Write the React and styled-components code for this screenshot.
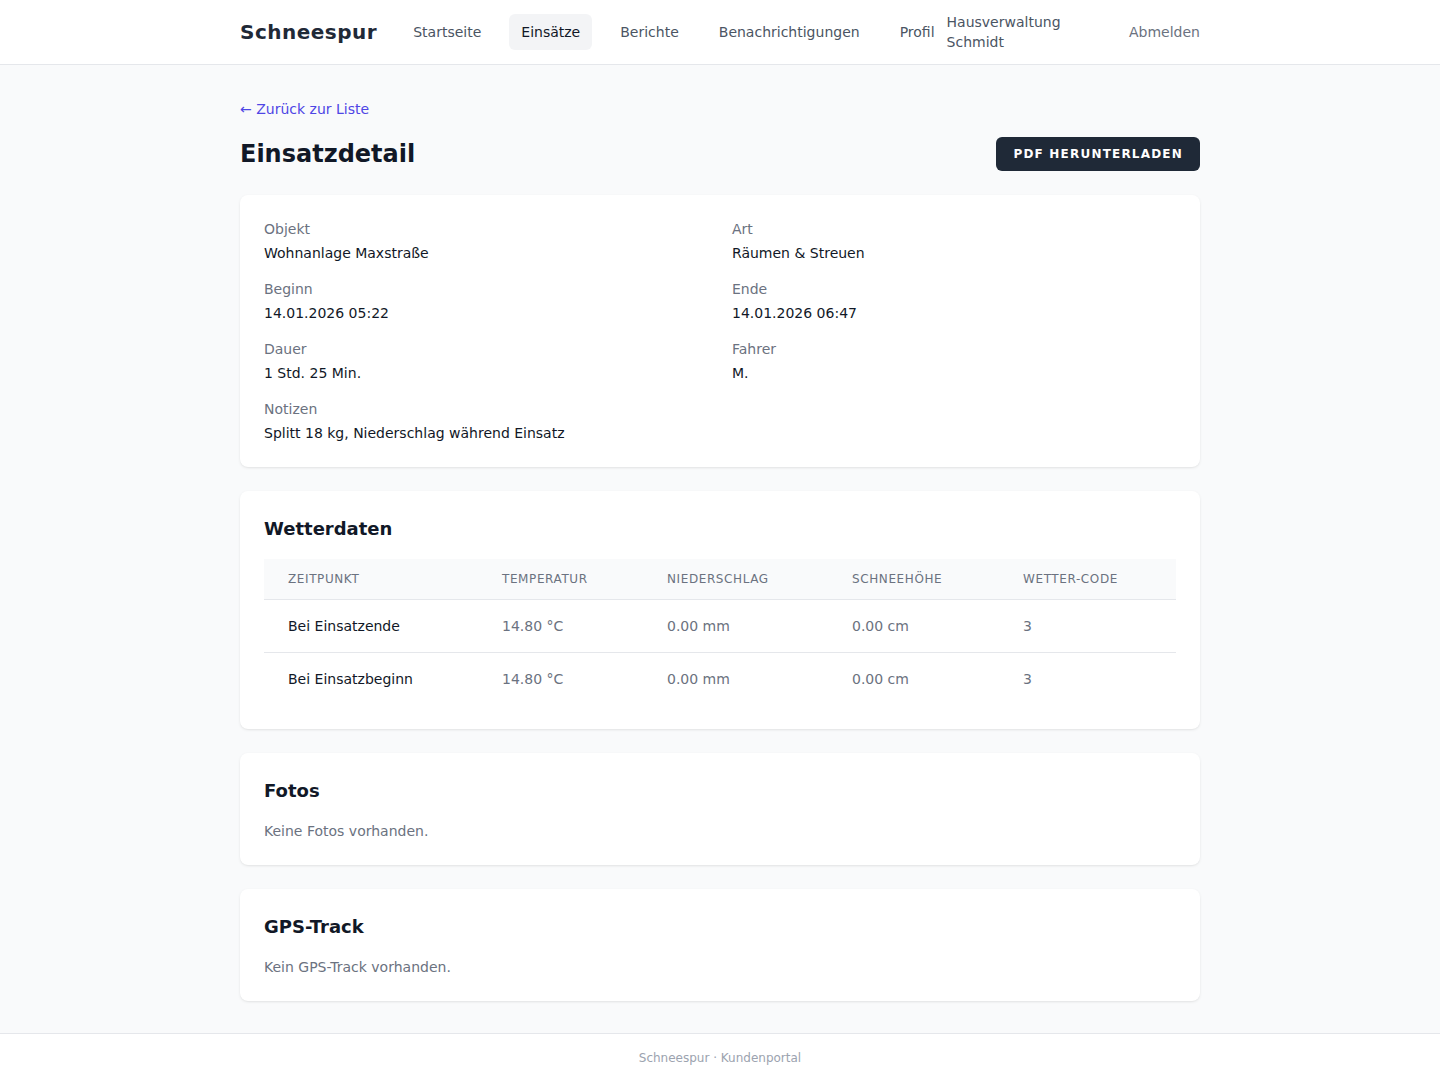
import React from "react";
import styled, { createGlobalStyle } from "styled-components";

const GlobalStyle = createGlobalStyle`
  *, *::before, *::after { box-sizing: border-box; }
  html, body { margin: 0; padding: 0; }
  body {
    font-family: "DejaVu Sans", "Liberation Sans", sans-serif;
    background: #f9fafb;
    color: #111827;
    -webkit-font-smoothing: antialiased;
  }
`;

const Page = styled.div`
  min-height: 100vh;
  display: flex;
  flex-direction: column;
`;

const Header = styled.header`
  background: #ffffff;
  border-bottom: 1px solid #e5e7eb;
  height: 65px;
`;

const HeaderInner = styled.div`
  max-width: 960px;
  margin: 0 auto;
  height: 64px;
  display: flex;
  align-items: center;
`;

const Logo = styled.div`
  font-size: 20px;
  font-weight: 700;
  letter-spacing: 0.025em;
  color: #1f2937;
  line-height: 28px;
`;

const Nav = styled.nav`
  display: flex;
  align-items: center;
  gap: 16px;
  margin-left: 24px;
`;

const NavLink = styled.a`
  font-size: 14px;
  line-height: 20px;
  padding: 8px 12px;
  border-radius: 6px;
  text-decoration: none;
  color: ${(p) => (p.$active ? "#111827" : "#4b5563")};
  background: ${(p) => (p.$active ? "#f3f4f6" : "transparent")};
`;

const UserName = styled.span`
  font-size: 14px;
  line-height: 20px;
  color: #4b5563;
  width: 166px;
`;

const Logout = styled.a`
  margin-left: auto;
  font-size: 14px;
  line-height: 20px;
  color: #6b7280;
  text-decoration: none;
`;

const Main = styled.main`
  flex: 1;
  width: 960px;
  margin: 0 auto;
  padding: 34px 0 32px;
`;

const BackLink = styled.a`
  display: block;
  font-size: 14px;
  line-height: 20px;
  color: #4f46e5;
  text-decoration: none;
  margin-bottom: 18px;
`;

const TitleRow = styled.div`
  display: flex;
  align-items: center;
  justify-content: space-between;
  height: 34px;
  margin-bottom: 24px;
`;

const Title = styled.h1`
  margin: 0;
  font-size: 24px;
  line-height: 32px;
  font-weight: 700;
  color: #111827;
`;

const PrimaryButton = styled.button`
  font-family: inherit;
  border: none;
  background: #1f2937;
  color: #ffffff;
  font-size: 12px;
  line-height: 16px;
  font-weight: 700;
  letter-spacing: 0.1em;
  text-transform: uppercase;
  padding: 9px 17px;
  border-radius: 6px;
`;

const Card = styled.section`
  background: #ffffff;
  border-radius: 8px;
  box-shadow: 0 1px 3px rgba(0, 0, 0, 0.08), 0 1px 2px -1px rgba(0, 0, 0, 0.08);
  padding: 24px;
  & + & { margin-top: 24px; }
`;

const DetailGrid = styled.dl`
  margin: 0;
  display: grid;
  grid-template-columns: 1fr 1fr;
  column-gap: 24px;
  row-gap: 16px;
`;

const Field = styled.div``;

const Label = styled.dt`
  font-size: 14px;
  line-height: 20px;
  color: #6b7280;
`;

const Value = styled.dd`
  margin: 4px 0 0;
  font-size: 14px;
  line-height: 20px;
  color: #111827;
`;

const CardTitle = styled.h2`
  margin: 0 0 16px;
  font-size: 18px;
  line-height: 28px;
  font-weight: 700;
  color: #111827;
`;

const Muted = styled.p`
  margin: 0;
  font-size: 14px;
  line-height: 20px;
  color: #6b7280;
`;

const Table = styled.table`
  width: 100%;
  border-collapse: collapse;
`;

const Th = styled.th`
  text-align: left;
  background: #f9fafb;
  font-size: 12px;
  line-height: 16px;
  font-weight: 400;
  letter-spacing: 0.05em;
  text-transform: uppercase;
  color: #6b7280;
  padding: 12px 24px;
  border-bottom: 1px solid #e5e7eb;
  width: ${(p) => p.$w}px;
`;

const Tr = styled.tr`
  & + & td { border-top: 1px solid #e5e7eb; }
`;

const Td = styled.td`
  font-size: 14px;
  line-height: 20px;
  padding: 16px 24px;
  color: ${(p) => (p.$strong ? "#111827" : "#6b7280")};
`;

const Footer = styled.footer`
  background: #ffffff;
  border-top: 1px solid #e5e7eb;
  padding: 16px 0;
  text-align: center;
  font-size: 12px;
  line-height: 16px;
  color: #9ca3af;
`;

const details = [
  ["Objekt", "Wohnanlage Maxstraße"],
  ["Art", "Räumen & Streuen"],
  ["Beginn", "14.01.2026 05:22"],
  ["Ende", "14.01.2026 06:47"],
  ["Dauer", "1 Std. 25 Min."],
  ["Fahrer", "M."],
  ["Notizen", "Splitt 18 kg, Niederschlag während Einsatz"],
];

const columns = [
  ["Zeitpunkt", 214],
  ["Temperatur", 165],
  ["Niederschlag", 185],
  ["Schneehöhe", 171],
  ["Wetter-Code", 177],
];

const weather = [
  ["Bei Einsatzende", "14.80 °C", "0.00 mm", "0.00 cm", "3"],
  ["Bei Einsatzbeginn", "14.80 °C", "0.00 mm", "0.00 cm", "3"],
];

const navItems = ["Startseite", "Einsätze", "Berichte", "Benachrichtigungen", "Profil"];

export default function App() {
  return (
    <Page>
      <GlobalStyle />
      <Header>
        <HeaderInner>
          <Logo>Schneespur</Logo>
          <Nav>
            {navItems.map((n) => (
              <NavLink key={n} href="#" $active={n === "Einsätze"}>
                {n}
              </NavLink>
            ))}
          </Nav>
          <UserName>Hausverwaltung Schmidt</UserName>
          <Logout href="#">Abmelden</Logout>
        </HeaderInner>
      </Header>

      <Main>
        <BackLink href="#">← Zurück zur Liste</BackLink>
        <TitleRow>
          <Title>Einsatzdetail</Title>
          <PrimaryButton>PDF herunterladen</PrimaryButton>
        </TitleRow>

        <Card>
          <DetailGrid>
            {details.map(([k, v]) => (
              <Field key={k}>
                <Label>{k}</Label>
                <Value>{v}</Value>
              </Field>
            ))}
          </DetailGrid>
        </Card>

        <Card>
          <CardTitle>Wetterdaten</CardTitle>
          <Table>
            <thead>
              <tr>
                {columns.map(([c, w]) => (
                  <Th key={c} $w={w}>
                    {c}
                  </Th>
                ))}
              </tr>
            </thead>
            <tbody>
              {weather.map((row) => (
                <Tr key={row[0]}>
                  {row.map((cell, i) => (
                    <Td key={i} $strong={i === 0}>
                      {cell}
                    </Td>
                  ))}
                </Tr>
              ))}
            </tbody>
          </Table>
        </Card>

        <Card>
          <CardTitle>Fotos</CardTitle>
          <Muted>Keine Fotos vorhanden.</Muted>
        </Card>

        <Card>
          <CardTitle>GPS-Track</CardTitle>
          <Muted>Kein GPS-Track vorhanden.</Muted>
        </Card>
      </Main>

      <Footer>Schneespur · Kundenportal</Footer>
    </Page>
  );
}
